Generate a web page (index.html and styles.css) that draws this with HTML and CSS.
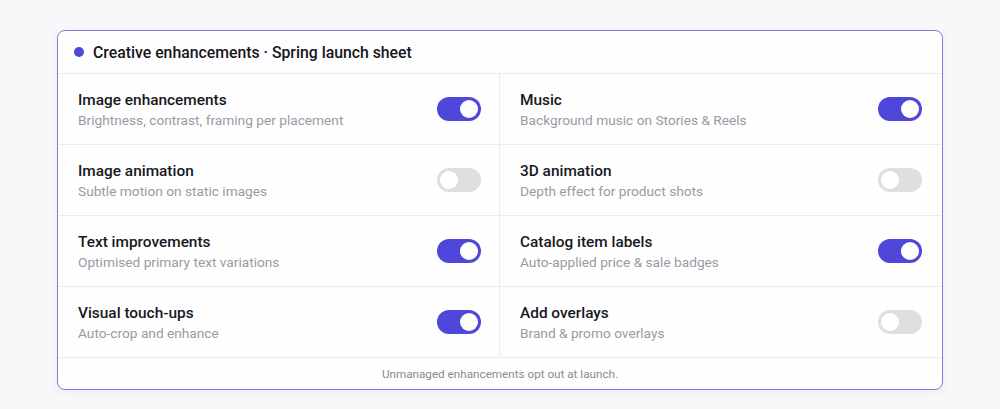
FILE: index.html
```html
<!DOCTYPE html>
<html lang="en">
<head>
    <meta charset="UTF-8">
    <title>Creative enhancements</title>
    <link rel="stylesheet" href="styles.css">
</head>
<body>

<div class="sheet">
    <div class="sheet-header">
        <span class="dot"></span>
        <span class="sheet-title">Creative enhancements · Spring launch sheet</span>
    </div>

    <div class="grid">
        <div class="cell">
            <div class="text">
                <div class="name">Image enhancements</div>
                <div class="desc">Brightness, contrast, framing per placement</div>
            </div>
            <span class="toggle on"></span>
        </div>
        <div class="cell">
            <div class="text">
                <div class="name">Music</div>
                <div class="desc">Background music on Stories &amp; Reels</div>
            </div>
            <span class="toggle on"></span>
        </div>

        <div class="cell">
            <div class="text">
                <div class="name">Image animation</div>
                <div class="desc">Subtle motion on static images</div>
            </div>
            <span class="toggle"></span>
        </div>
        <div class="cell">
            <div class="text">
                <div class="name">3D animation</div>
                <div class="desc">Depth effect for product shots</div>
            </div>
            <span class="toggle"></span>
        </div>

        <div class="cell">
            <div class="text">
                <div class="name">Text improvements</div>
                <div class="desc">Optimised primary text variations</div>
            </div>
            <span class="toggle on"></span>
        </div>
        <div class="cell">
            <div class="text">
                <div class="name">Catalog item labels</div>
                <div class="desc">Auto-applied price &amp; sale badges</div>
            </div>
            <span class="toggle on"></span>
        </div>

        <div class="cell">
            <div class="text">
                <div class="name">Visual touch-ups</div>
                <div class="desc">Auto-crop and enhance</div>
            </div>
            <span class="toggle on"></span>
        </div>
        <div class="cell">
            <div class="text">
                <div class="name">Add overlays</div>
                <div class="desc">Brand &amp; promo overlays</div>
            </div>
            <span class="toggle"></span>
        </div>
    </div>

    <div class="sheet-footer">Unmanaged enhancements opt out at launch.</div>
</div>

</body>
</html>
```

FILE: styles.css
```css
body {
    margin: 0;
    padding: 30px 57px;
    background-color: #f8f8fa;
    font-family: Roboto, "Liberation Sans", sans-serif;
    color: #1b1b22;
}

.sheet {
    background: #fefefe;
    border: 1px solid #807ddd;
    border-radius: 8px;
    box-shadow: 0 2px 8px rgba(60, 60, 90, 0.06);
    overflow: hidden;
}

.sheet-header {
    display: flex;
    align-items: center;
    gap: 9px;
    height: 42px;
    padding: 0 16px;
    border-bottom: 1px solid #ececf0;
}

.dot {
    width: 10px;
    height: 10px;
    border-radius: 50%;
    background: #4f47d9;
}

.sheet-title {
    font-size: 15.8px;
    font-weight: 500;
    color: #16161c;
}

.grid {
    display: grid;
    grid-template-columns: 1fr 1fr;
}

.cell {
    display: flex;
    align-items: center;
    justify-content: space-between;
    height: 70px;
    padding: 0 20px;
    border-bottom: 1px solid #ececf0;
}

.cell:nth-child(odd) {
    border-right: 1px solid #ececf0;
    padding-right: 18px;
}

.name {
    font-size: 15.4px;
    font-weight: 500;
    color: #18181e;
    margin-bottom: 3px;
}

.desc {
    font-size: 13.7px;
    color: #9a9aa4;
}

.toggle {
    position: relative;
    width: 44px;
    height: 24px;
    border-radius: 12px;
    background: #dfdfe2;
    flex-shrink: 0;
}

.toggle::after {
    content: "";
    position: absolute;
    top: 3px;
    left: 3px;
    width: 18px;
    height: 18px;
    border-radius: 50%;
    background: #ffffff;
}

.toggle.on {
    background: #4f47d9;
}

.toggle.on::after {
    left: 23px;
}

.sheet-footer {
    height: 31px;
    display: flex;
    align-items: center;
    justify-content: center;
    font-size: 11.7px;
    color: #8a8a94;
}
```
